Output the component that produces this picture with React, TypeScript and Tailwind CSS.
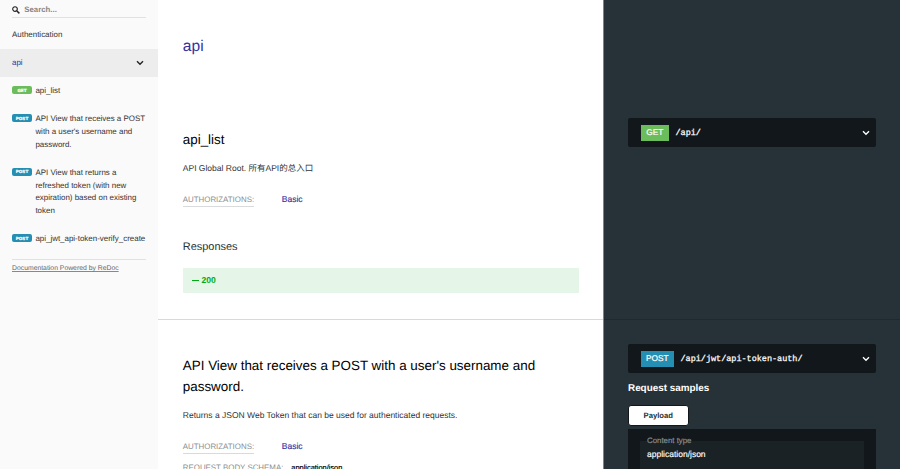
import React from "react";

function Chevron({ className }: { className: string }) {
  return (
    <svg viewBox="0 0 8 6" className={className} fill="none" stroke="currentColor" strokeWidth="1.35">
      <path d="M1 1.2 L4 4.3 L7 1.2" />
    </svg>
  );
}

function Badge({ verb }: { verb: "GET" | "POST" }) {
  return (
    <span
      className={`mt-px flex h-[8px] w-[20px] shrink-0 items-center justify-center rounded-[2px] pt-[1.5px] font-['DejaVu_Sans',Verdana,sans-serif] text-[4.2px] leading-[6px] font-bold text-white [-webkit-text-stroke:0.2px_white] ${
        verb === "GET" ? "bg-[#6bbd5b]" : "bg-[#248fb2]"
      }`}
    >
      {verb}
    </span>
  );
}

function MenuItem({ verb, lines }: { verb: "GET" | "POST"; lines: string[] }) {
  return (
    <div className="flex gap-[3.4px] pt-[8px] pb-[7px] pl-[12px]">
      <Badge verb={verb} />
      <div className="text-[7.95px] leading-[12.9px] whitespace-nowrap text-[#333]">
        {lines.map((l) => (
          <div key={l}>{l}</div>
        ))}
      </div>
    </div>
  );
}

function Authorizations() {
  return (
    <div className="flex h-[15px] text-[#8b8f92]">
      <div className="w-[99px]">
        <span className="inline-block h-[15px] border-b border-[#d8dadb] text-[7.9px] leading-[15px]">AUTHORIZATIONS:</span>
      </div>
      <span className="text-[8.5px] leading-[14px] text-[#32329f] [-webkit-text-stroke:0.15px_#32329f]">Basic</span>
    </div>
  );
}

function Endpoint({ verb, path }: { verb: "GET" | "POST"; path: string }) {
  return (
    <div className="flex h-[29px] w-[247.5px] items-center rounded-[2px] bg-[#11171a] pr-[6px] pl-[12.5px] text-white">
      <span
        className={`flex h-[16px] items-center justify-center text-[8.3px] [-webkit-text-stroke:0.2px_white] ${
          verb === "GET" ? "w-[28.5px] bg-[#6bbd5b]" : "w-[33.5px] bg-[#248fb2]"
        }`}
      >
        {verb}
      </span>
      <span className="ml-[6.5px] flex-1 pt-[1.5px] font-['Liberation_Mono',monospace] text-[8.47px] [-webkit-text-stroke:0.25px_white]">{path}</span>
      <Chevron className="h-[6px] w-[8px]" />
    </div>
  );
}

export default function App() {
  return (
    <div className="flex h-[469px] w-[900px] overflow-hidden bg-white font-['Liberation_Sans','Noto_Sans_CJK_SC',sans-serif] text-[8.5px] text-[#333] [text-rendering:geometricPrecision]">
      <aside className="w-[158px] shrink-0 bg-[#fafafa]">
        <div className="mx-[12px] flex h-[18px] w-[134px] items-center border-b border-[#e1e1e1] pt-[3px]">
          <svg viewBox="0 0 9 9" className="h-[8px] w-[8px] text-[#222]" fill="none" stroke="currentColor">
            <circle cx="3.4" cy="3.4" r="2.6" strokeWidth="1.3" />
            <path d="M5.3 5.3 L8.3 8.3" strokeWidth="1.6" />
          </svg>
          <span className="ml-[4.3px] text-[7.8px] font-bold text-[#858585]">Search...</span>
        </div>
        <div className="mt-[3px] flex h-[28px] items-center pl-[12px] text-[7.95px]">Authentication</div>
        <div className="flex h-[28px] items-center justify-between bg-[#ededed] pr-[14px] pl-[12px] text-[7.95px] text-[#32329f]">
          api
          <Chevron className="h-[6px] w-[8px] text-[#222]" />
        </div>
        <MenuItem verb="GET" lines={["api_list"]} />
        <MenuItem verb="POST" lines={["API View that receives a POST", "with a user's username and", "password."]} />
        <MenuItem verb="POST" lines={["API View that returns a", "refreshed token (with new", "expiration) based on existing", "token"]} />
        <MenuItem verb="POST" lines={["api_jwt_api-token-verify_create"]} />
        <div className="mx-[12px] mt-[6px] w-[134px] border-t border-[#e1e1e1] pt-[4px] text-[6.84px] leading-[9px] text-[#666]">
          <span className="underline decoration-[#888] decoration-[0.7px] underline-offset-[1.2px]">Documentation Powered by ReDoc</span>
        </div>
      </aside>

      <main className="w-[445px] shrink-0">
        <section className="h-[320px] border-b border-[#d9d9d9] pt-[35px] pl-[24.8px]">
          <h1 className="h-[24px] text-[15.6px] leading-[24px] text-[#32329f]">api</h1>
          <h2 className="mt-[70px] h-[21px] text-[13.4px] leading-[21px] text-black">api_list</h2>
          <p className="mt-[11px] h-[14px] leading-[14px]">API Global Root. 所有API的总入口</p>
          <div className="mt-[16.5px]">
            <Authorizations />
          </div>
          <h3 className="mt-[32.5px] h-[16px] text-[10.95px] leading-[16px] text-[#263238]">Responses</h3>
          <div className="mt-[13px] flex h-[25px] w-[396px] items-center rounded-[1px] bg-[#e5f5e7] pl-[9px] text-[8.6px] font-bold text-[#00aa13]">
            <span className="mr-[2.7px] h-px w-[7px] bg-[#00aa13]" />
            200
          </div>
        </section>
        <section className="pt-[35px] pl-[24.8px]">
          <h2 className="h-[43px] text-[13.42px] leading-[21.4px] whitespace-nowrap text-black">
            API View that receives a POST with a user's username and
            <br />
            password.
          </h2>
          <p className="mt-[10px] h-[14px] leading-[14px]">Returns a JSON Web Token that can be used for authenticated requests.</p>
          <div className="mt-[17px]">
            <Authorizations />
          </div>
          <div className="mt-[7px] flex h-[8px] leading-[14px] whitespace-nowrap">
            <span className="text-[7.9px] text-[#8b8f92]">REQUEST BODY SCHEMA:</span>
            <span className="ml-[8px] text-[7.4px] text-black [-webkit-text-stroke:0.2px_black]">application/json</span>
          </div>
        </section>
      </main>

      <div className="w-[297px] shrink-0 border-l border-[#7d8488] bg-[#263238] text-white">
        <section className="h-[320px] border-b border-[#1f292e] pt-[118px] pl-[24px]">
          <Endpoint verb="GET" path="/api/" />
        </section>
        <section className="pt-[24px] pl-[24px]">
          <Endpoint verb="POST" path="/api/jwt/api-token-auth/" />
          <h3 className="mt-[8px] h-[15px] text-[9.9px] leading-[15px] font-bold">Request samples</h3>
          <div className="mt-[9px] flex h-[21px] w-[60.5px] items-center justify-center rounded-[3px] border border-[#11171a] bg-white text-[7.7px] font-bold text-[#263238]">
            Payload
          </div>
          <div className="mt-[3px] h-[40px] w-[247.5px] bg-[#11171a] px-[12px] pt-[12px]">
            <div className="flex h-[28px] flex-col bg-[#1a2226] pl-[7px]">
              <div className="-mt-[7px] h-[12px] pt-px text-[7.85px] leading-[12px] text-[#8b8f91] [-webkit-text-stroke:0.15px_#8b8f91]">Content type</div>
              <div className="mt-[1px] text-[8.5px] leading-[14px] [-webkit-text-stroke:0.15px_white]">application/json</div>
            </div>
          </div>
        </section>
      </div>
    </div>
  );
}
